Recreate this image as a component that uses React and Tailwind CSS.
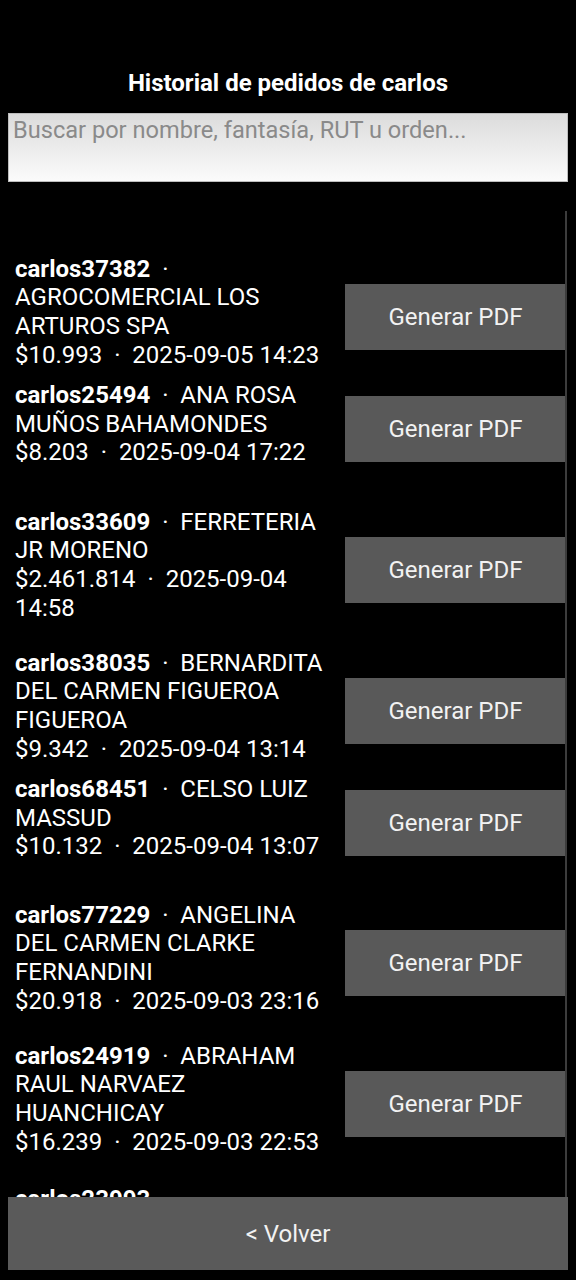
import React from "react";

const orders = [
  { code: "carlos37382", name: "AGROCOMERCIAL LOS ARTUROS SPA", total: "$10.993", date: "2025-09-05 14:23", h: "h-[120px]" },
  { code: "carlos25494", name: "ANA ROSA MUÑOS BAHAMONDES", total: "$8.203", date: "2025-09-04 17:22", h: "h-[104px]" },
  { code: "carlos33609", name: "FERRETERIA JR MORENO", total: "$2.461.814", date: "2025-09-04 14:58", h: "h-[178px]" },
  { code: "carlos38035", name: "BERNARDITA DEL CARMEN FIGUEROA FIGUEROA", total: "$9.342", date: "2025-09-04 13:14", h: "h-[104px]" },
  { code: "carlos68451", name: "CELSO LUIZ MASSUD", total: "$10.132", date: "2025-09-04 13:07", h: "h-[120px]" },
  { code: "carlos77229", name: "ANGELINA DEL CARMEN CLARKE FERNANDINI", total: "$20.918", date: "2025-09-03 23:16", h: "h-[160px]" },
  { code: "carlos24919", name: "ABRAHAM RAUL NARVAEZ HUANCHICAY", total: "$16.239", date: "2025-09-03 22:53", h: "h-[122px]" },
  { code: "carlos23993", name: "AGROINDUSTRIAL EL MAITEN LTDA", total: "$7.480", date: "2025-09-03 20:11", h: "h-[164px]" },
];

function OrderRow({ order }) {
  return (
    <div className={`flex items-center shrink-0 ${order.h}`}>
      <div className="flex-1 min-w-0 pl-[15px] pr-[20px] text-[24px] leading-[28.7px] text-white whitespace-pre-wrap">
        <div>
          <span className="font-bold">{order.code}</span>
          {"  ·  "}
          {order.name}
        </div>
        <div>
          {order.total}
          {"  ·  "}
          {order.date}
        </div>
      </div>
      <button className="mt-[10px] w-[221px] h-[66px] shrink-0 bg-[#595959] text-[24px] text-[#f2f2f2]">
        Generar PDF
      </button>
    </div>
  );
}

export default function App() {
  return (
    <div className="h-[1280px] bg-black flex flex-col overflow-hidden font-['Roboto',sans-serif]">
      {/* Header */}
      <h1 className="pt-[69px] text-center text-[24px] leading-[28px] font-bold text-white">
        Historial de pedidos de carlos
      </h1>

      {/* Search */}
      <div className="mx-[8px] mt-[16px] h-[69px] border border-[#bdbdbd] bg-gradient-to-b from-[#dcdcdc] to-[#fbfbfb] px-[4px] pt-[2px]">
        <div className="text-[23.6px] leading-[28px] text-[#8a8a8a] whitespace-nowrap">
          Buscar por nombre, fantasía, RUT u orden...
        </div>
      </div>

      {/* List */}
      <div className="relative flex-1 min-h-0 mt-[29px] overflow-hidden">
        <div className="absolute right-[9px] top-0 bottom-0 w-[2px] bg-[#3c3c3c]" />
        <div className="flex flex-col pt-[41px] pr-[10px]">
          {orders.map((o) => (
            <OrderRow key={o.code} order={o} />
          ))}
        </div>
      </div>

      {/* Back */}
      <button className="mx-[8px] mb-[10px] h-[73px] shrink-0 bg-[#5a5a5a] text-[24px] text-[#f2f2f2]">
        &lt; Volver
      </button>
    </div>
  );
}
